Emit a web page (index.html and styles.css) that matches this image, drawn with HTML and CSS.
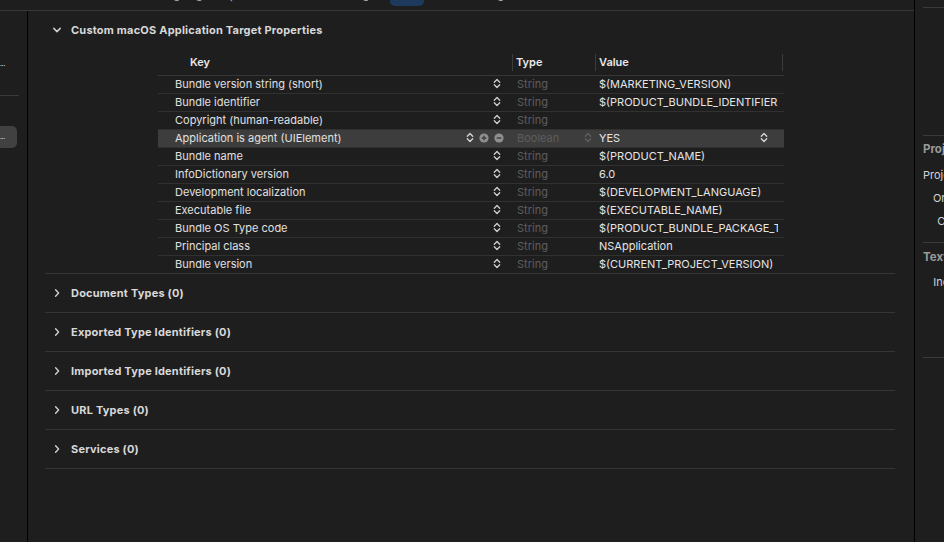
FILE: index.html
```html
<!DOCTYPE html>
<html lang="en">
<head>
<meta charset="utf-8">
<title>Info</title>
<link rel="stylesheet" href="styles.css">
</head>
<body>
<div class="app">
  <div class="main-col">
    <div class="tabbar">
      <div class="tabs">
        <span class="tab">General</span>
        <span class="tab">Signing &amp; Capabilities</span>
        <span class="tab">Resource Tags</span>
        <span class="tab active">Info</span>
        <span class="tab">Build Settings</span>
        <span class="tab">Build Phases</span>
        <span class="tab">Build Rules</span>
      </div>
    </div>
    <div class="workspace">
      <aside class="targets">
        <div class="t-group">
          <div class="t-item">...</div>
        </div>
        <div class="t-group">
          <div class="t-item selected">...</div>
        </div>
      </aside>
      <main class="editor">
        <section class="section">
          <div class="sec-head">
            <svg class="chev" width="10" height="10" viewBox="0 0 10 10"><path d="M1.8 3.4 L5 6.6 L8.2 3.4" fill="none" stroke="#cfcfcf" stroke-width="1.5" stroke-linecap="round" stroke-linejoin="round"/></svg>
            <span>Custom macOS Application Target Properties</span>
          </div>
          <div class="plist">
            <div class="prow phead">
              <div class="h-key">Key</div>
              <div class="h-type">Type</div>
              <div class="h-val">Value</div>
            </div>
            <div class="prow"><div class="c-key"><span class="k">Bundle version string (short)</span><svg class="step" width="8" height="11" viewBox="0 0 8 11"><path d="M1.3 4.2 L4 1.5 L6.7 4.2 M1.3 6.8 L4 9.5 L6.7 6.8" fill="none" stroke="#d0d0d0" stroke-width="1.3" stroke-linecap="round" stroke-linejoin="round"/></svg></div><div class="c-type">String</div><div class="c-val"><span class="v">$(MARKETING_VERSION)</span></div></div>
            <div class="prow"><div class="c-key"><span class="k">Bundle identifier</span><svg class="step" width="8" height="11" viewBox="0 0 8 11"><path d="M1.3 4.2 L4 1.5 L6.7 4.2 M1.3 6.8 L4 9.5 L6.7 6.8" fill="none" stroke="#d0d0d0" stroke-width="1.3" stroke-linecap="round" stroke-linejoin="round"/></svg></div><div class="c-type">String</div><div class="c-val"><span class="v">$(PRODUCT_BUNDLE_IDENTIFIER)</span></div></div>
            <div class="prow"><div class="c-key"><span class="k">Copyright (human-readable)</span><svg class="step" width="8" height="11" viewBox="0 0 8 11"><path d="M1.3 4.2 L4 1.5 L6.7 4.2 M1.3 6.8 L4 9.5 L6.7 6.8" fill="none" stroke="#d0d0d0" stroke-width="1.3" stroke-linecap="round" stroke-linejoin="round"/></svg></div><div class="c-type">String</div><div class="c-val"><span class="v"></span></div></div>
            <div class="prow selected"><div class="c-key"><span class="k">Application is agent (UIElement)</span><svg class="step" width="8" height="11" viewBox="0 0 8 11"><path d="M1.3 4.2 L4 1.5 L6.7 4.2 M1.3 6.8 L4 9.5 L6.7 6.8" fill="none" stroke="#d8d8d8" stroke-width="1.3" stroke-linecap="round" stroke-linejoin="round"/></svg><svg class="circ" width="10" height="10" viewBox="0 0 10 10"><circle cx="5" cy="5" r="4.6" fill="#8f8f8f"/><path d="M5 2.7 V7.3 M2.7 5 H7.3" stroke="#3e3e3e" stroke-width="1.4"/></svg><svg class="circ" width="10" height="10" viewBox="0 0 10 10"><circle cx="5" cy="5" r="4.6" fill="#8f8f8f"/><path d="M2.7 5 H7.3" stroke="#3e3e3e" stroke-width="1.4"/></svg></div><div class="c-type"><span>Boolean</span><svg class="step" width="8" height="11" viewBox="0 0 8 11"><path d="M1.3 4.2 L4 1.5 L6.7 4.2 M1.3 6.8 L4 9.5 L6.7 6.8" fill="none" stroke="#5e5e5e" stroke-width="1.3" stroke-linecap="round" stroke-linejoin="round"/></svg></div><div class="c-val"><span class="v">YES</span><svg class="step" width="8" height="11" viewBox="0 0 8 11"><path d="M1.3 4.2 L4 1.5 L6.7 4.2 M1.3 6.8 L4 9.5 L6.7 6.8" fill="none" stroke="#d8d8d8" stroke-width="1.3" stroke-linecap="round" stroke-linejoin="round"/></svg></div></div>
            <div class="prow"><div class="c-key"><span class="k">Bundle name</span><svg class="step" width="8" height="11" viewBox="0 0 8 11"><path d="M1.3 4.2 L4 1.5 L6.7 4.2 M1.3 6.8 L4 9.5 L6.7 6.8" fill="none" stroke="#d0d0d0" stroke-width="1.3" stroke-linecap="round" stroke-linejoin="round"/></svg></div><div class="c-type">String</div><div class="c-val"><span class="v">$(PRODUCT_NAME)</span></div></div>
            <div class="prow"><div class="c-key"><span class="k">InfoDictionary version</span><svg class="step" width="8" height="11" viewBox="0 0 8 11"><path d="M1.3 4.2 L4 1.5 L6.7 4.2 M1.3 6.8 L4 9.5 L6.7 6.8" fill="none" stroke="#d0d0d0" stroke-width="1.3" stroke-linecap="round" stroke-linejoin="round"/></svg></div><div class="c-type">String</div><div class="c-val"><span class="v">6.0</span></div></div>
            <div class="prow"><div class="c-key"><span class="k">Development localization</span><svg class="step" width="8" height="11" viewBox="0 0 8 11"><path d="M1.3 4.2 L4 1.5 L6.7 4.2 M1.3 6.8 L4 9.5 L6.7 6.8" fill="none" stroke="#d0d0d0" stroke-width="1.3" stroke-linecap="round" stroke-linejoin="round"/></svg></div><div class="c-type">String</div><div class="c-val"><span class="v">$(DEVELOPMENT_LANGUAGE)</span></div></div>
            <div class="prow"><div class="c-key"><span class="k">Executable file</span><svg class="step" width="8" height="11" viewBox="0 0 8 11"><path d="M1.3 4.2 L4 1.5 L6.7 4.2 M1.3 6.8 L4 9.5 L6.7 6.8" fill="none" stroke="#d0d0d0" stroke-width="1.3" stroke-linecap="round" stroke-linejoin="round"/></svg></div><div class="c-type">String</div><div class="c-val"><span class="v">$(EXECUTABLE_NAME)</span></div></div>
            <div class="prow"><div class="c-key"><span class="k">Bundle OS Type code</span><svg class="step" width="8" height="11" viewBox="0 0 8 11"><path d="M1.3 4.2 L4 1.5 L6.7 4.2 M1.3 6.8 L4 9.5 L6.7 6.8" fill="none" stroke="#d0d0d0" stroke-width="1.3" stroke-linecap="round" stroke-linejoin="round"/></svg></div><div class="c-type">String</div><div class="c-val"><span class="v">$(PRODUCT_BUNDLE_PACKAGE_TYPE)</span></div></div>
            <div class="prow"><div class="c-key"><span class="k">Principal class</span><svg class="step" width="8" height="11" viewBox="0 0 8 11"><path d="M1.3 4.2 L4 1.5 L6.7 4.2 M1.3 6.8 L4 9.5 L6.7 6.8" fill="none" stroke="#d0d0d0" stroke-width="1.3" stroke-linecap="round" stroke-linejoin="round"/></svg></div><div class="c-type">String</div><div class="c-val"><span class="v">NSApplication</span></div></div>
            <div class="prow last"><div class="c-key"><span class="k">Bundle version</span><svg class="step" width="8" height="11" viewBox="0 0 8 11"><path d="M1.3 4.2 L4 1.5 L6.7 4.2 M1.3 6.8 L4 9.5 L6.7 6.8" fill="none" stroke="#d0d0d0" stroke-width="1.3" stroke-linecap="round" stroke-linejoin="round"/></svg></div><div class="c-type">String</div><div class="c-val"><span class="v">$(CURRENT_PROJECT_VERSION)</span></div></div>
          </div>
        </section>
        <section class="section">
          <div class="sec-head"><svg class="chev" width="10" height="10" viewBox="0 0 10 10"><path d="M3.6 1.8 L6.6 5 L3.6 8.2" fill="none" stroke="#cfcfcf" stroke-width="1.4" stroke-linecap="round" stroke-linejoin="round"/></svg><span>Document Types (0)</span></div>
        </section>
        <section class="section">
          <div class="sec-head"><svg class="chev" width="10" height="10" viewBox="0 0 10 10"><path d="M3.6 1.8 L6.6 5 L3.6 8.2" fill="none" stroke="#cfcfcf" stroke-width="1.4" stroke-linecap="round" stroke-linejoin="round"/></svg><span>Exported Type Identifiers (0)</span></div>
        </section>
        <section class="section">
          <div class="sec-head"><svg class="chev" width="10" height="10" viewBox="0 0 10 10"><path d="M3.6 1.8 L6.6 5 L3.6 8.2" fill="none" stroke="#cfcfcf" stroke-width="1.4" stroke-linecap="round" stroke-linejoin="round"/></svg><span>Imported Type Identifiers (0)</span></div>
        </section>
        <section class="section">
          <div class="sec-head"><svg class="chev" width="10" height="10" viewBox="0 0 10 10"><path d="M3.6 1.8 L6.6 5 L3.6 8.2" fill="none" stroke="#cfcfcf" stroke-width="1.4" stroke-linecap="round" stroke-linejoin="round"/></svg><span>URL Types (0)</span></div>
        </section>
        <section class="section">
          <div class="sec-head"><svg class="chev" width="10" height="10" viewBox="0 0 10 10"><path d="M3.6 1.8 L6.6 5 L3.6 8.2" fill="none" stroke="#cfcfcf" stroke-width="1.4" stroke-linecap="round" stroke-linejoin="round"/></svg><span>Services (0)</span></div>
        </section>
      </main>
    </div>
  </div>
  <aside class="inspector">
    <div class="i-block i-first"></div>
    <div class="i-block i-project">
      <div class="i-title">Project Document</div>
      <div class="i-row"><span class="i-label">Project Format</span></div>
      <div class="i-row"><span class="i-label">Organization</span></div>
      <div class="i-row"><span class="i-label">Class Prefix</span></div>
    </div>
    <div class="i-block i-text">
      <div class="i-title">Text Settings</div>
      <div class="i-row"><span class="i-label">Indent Using</span></div>
    </div>
    <div class="i-block"></div>
  </aside>
</div>
</body>
</html>
```

FILE: styles.css
```css
* { box-sizing: border-box; }

html, body {
  margin: 0;
  padding: 0;
  background: #1f1e1f;
}

body {
  width: 944px;
  height: 542px;
  overflow: hidden;
  font-family: Inter, "Liberation Sans", sans-serif;
  font-size: 11px;
  color: #dedede;
}

.app {
  display: flex;
  width: 944px;
  height: 542px;
}

.main-col {
  width: 914px;
  display: flex;
  flex-direction: column;
}

/* top tab strip (mostly scrolled out of view) */
.tabbar {
  height: 11px;
  border-bottom: 1px solid #383838;
  overflow: hidden;
  display: flex;
  align-items: flex-end;
  padding-left: 94px;
}

.tabs {
  display: flex;
  gap: 8px;
  margin-bottom: 4px;
}

.tab {
  height: 22px;
  line-height: 22px;
  padding: 0 7px;
  color: #bdbdbd;
  border-radius: 5px;
  white-space: nowrap;
}

.tab.active {
  background: #1d3a5d;
  color: #ffffff;
}

.workspace {
  flex: 1;
  display: flex;
  min-height: 0;
}

/* target list */
.targets {
  width: 28px;
  border-right: 1px solid #000;
  padding-top: 42px;
  overflow: hidden;
}

.t-group {
  width: 19px;
}

.t-group:first-child {
  border-bottom: 1px solid #3a3a3a;
  padding-bottom: 20px;
  margin-bottom: 30px;
}

.t-item {
  height: 22px;
  line-height: 22px;
  font-size: 6px;
  font-weight: 700;
  color: #d8d8d8;
  letter-spacing: -0.4px;
  white-space: nowrap;
}

.t-item.selected {
  width: 17px;
  background: #414141;
  border-radius: 0 5px 5px 0;
}

/* editor */
.editor {
  flex: 1;
  padding: 0 19px 0 17px;
  overflow: hidden;
}

.section {
  border-bottom: 1px solid #353535;
}

.sec-head {
  height: 38px;
  display: flex;
  align-items: center;
  gap: 9px;
  padding-left: 7px;
  font-weight: 700;
  letter-spacing: 0.2px;
  color: #d8d8d8;
}

.chev { flex: none; }

.plist {
  margin-left: 113px;
  width: 626px;
}

.prow {
  display: grid;
  grid-template-columns: 354px 83px 189px;
  height: 18px;
  padding-bottom: 2px;
  border-bottom: 1px solid #313131;
  align-items: center;
}

.prow.last {
  border-bottom: none;
  height: 17px;
}

.prow.selected {
  background: #3d3d3d;
}

.phead {
  height: 27px;
  padding-bottom: 0;
  border-bottom: 1px solid #363636;
  font-weight: 600;
  color: #e8e8e8;
}

.h-key {
  padding-left: 32px;
}

.h-type,
.h-val {
  height: 17px;
  line-height: 17px;
  border-left: 1px solid #3c3c3c;
  padding-left: 3px;
}

.h-val {
  border-right: 1px solid #3c3c3c;
  margin-right: 1px;
}

.c-key {
  display: flex;
  align-items: center;
  padding: 0 11px 0 17px;
  gap: 3px;
  white-space: nowrap;
  overflow: hidden;
  color: #e0e0e0;
}

.c-key .k {
  flex: 1;
  overflow: hidden;
}

.c-key .step { flex: none; }

.c-key .circ { flex: none; margin-left: 2px; }

.prow.selected .c-key { padding-right: 8px; }

.c-type {
  display: flex;
  align-items: center;
  justify-content: space-between;
  padding: 0 3px 0 5px;
  color: #5d5d5d;
}

.c-val {
  display: flex;
  align-items: center;
  padding: 0 6px 0 4px;
  white-space: nowrap;
  overflow: hidden;
  color: #e4e4e4;
}

.c-val .v {
  flex: 1;
  min-width: 0;
  overflow: hidden;
}

.c-val .step {
  flex: none;
  margin-right: 10px;
}

/* inspector */
.inspector {
  flex: 1;
  border-left: 1px solid #000;
  padding: 7px 0 0 8px;
  overflow: hidden;
  white-space: nowrap;
}

.i-block {
  border-top: 1px solid #3a3a3a;
}

.i-first { height: 128px; }

.i-project {
  height: 107px;
  padding-top: 6px;
}

.i-text {
  height: 115px;
  padding-top: 7px;
}

.i-title {
  height: 14px;
  line-height: 14px;
  font-weight: 700;
  font-size: 11.5px;
  color: #9a9a9a;
  margin-bottom: 8px;
}

.i-text .i-title { margin-bottom: 7px; }

.i-row {
  height: 23px;
  line-height: 23px;
  width: 76px;
  text-align: right;
  color: #d2d2d2;
}
```
